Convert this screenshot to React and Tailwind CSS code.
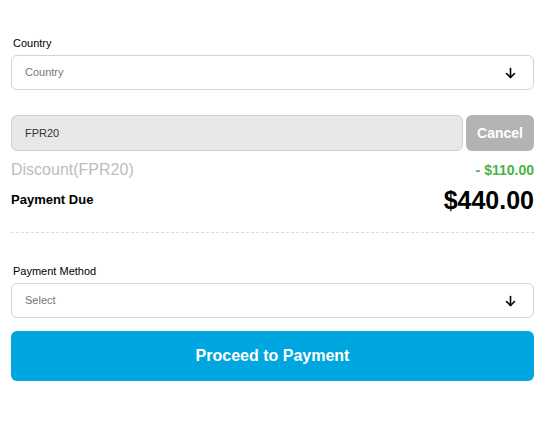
import React from "react";

function Arrow() {
  return (
    <svg width="11" height="12" viewBox="0 0 11 12" fill="none" stroke="#000" strokeWidth="1.6" strokeLinecap="round" strokeLinejoin="round">
      <path d="M5.5 1.5v9" />
      <path d="M1.5 6.5l4 4 4-4" />
    </svg>
  );
}

function SelectBox({ placeholder }) {
  return (
    <div className="flex h-[35px] items-center justify-between rounded-[6px] border border-[#d3d3d3] bg-white pl-[13px] pr-[17px]">
      <span className="text-[11px] text-[#777]">{placeholder}</span>
      <Arrow />
    </div>
  );
}

export default function App() {
  return (
    <div className="min-h-[435px] w-[550px] bg-white" style={{ fontFamily: '"Liberation Sans", Arial, sans-serif' }}>
      <div className="ml-[11px] w-[523px] pt-[36px]">
        <div className="mb-[5px] pl-[2px] text-[11px] leading-[14px] text-black">Country</div>
        <SelectBox placeholder="Country" />

        <div className="mt-[25px] flex gap-[3px]">
          <div className="flex h-[36px] flex-1 items-center rounded-[6px] border border-[#d0d0d0] bg-[#e8e8e8] pl-[13px] text-[11px] text-[#333]">
            FPR20
          </div>
          <button className="h-[36px] w-[68px] rounded-[6px] bg-[#b3b3b3] text-[14px] font-bold text-white">Cancel</button>
        </div>

        <div className="mt-[9px] flex items-center justify-between">
          <span className="text-[16px] leading-[20px] text-[#bdbdbd]">Discount(FPR20)</span>
          <span className="text-[14px] font-bold leading-[20px] text-[#47b347]">- $110.00</span>
        </div>

        <div className="mt-[4px] flex items-center justify-between">
          <span className="text-[13px] font-bold leading-[20px] text-black">Payment Due</span>
          <span className="text-[25px] font-bold leading-[32px] text-black">$440.00</span>
        </div>

        <div className="mt-[16px] border-t border-dashed border-[#dcdcdc]" />

        <div className="mt-[31px] mb-[5px] pl-[2px] text-[11px] leading-[14px] text-black">Payment Method</div>
        <SelectBox placeholder="Select" />

        <button className="mt-[13px] h-[50px] w-full rounded-[6px] bg-[#00a6df] text-[16px] font-bold text-white">
          Proceed to Payment
        </button>
      </div>
    </div>
  );
}
